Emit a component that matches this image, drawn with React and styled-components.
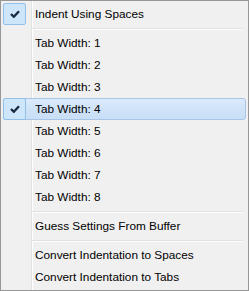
import React from "react";
import styled, { createGlobalStyle } from "styled-components";

const Global = createGlobalStyle`
  html, body { margin: 0; padding: 0; background: #fff; }
  body { font-family: "Segoe UI", "Liberation Sans", "Noto Sans", Arial, sans-serif; }
`;

const Menu = styled.div`
  box-sizing: border-box;
  width: 249px;
  height: 291px;
  border: 1px solid #979797;
  padding: 2px;
  background:
    linear-gradient(to right, transparent 30px, #e2e3e3 30px, #e2e3e3 31px, #ffffff 31px, #ffffff 32px, transparent 32px),
    #f0f0f0;
  display: flex;
  flex-direction: column;
`;

const Item = styled.div`
  box-sizing: border-box;
  height: 22px;
  display: flex;
  align-items: center;
  border-radius: 3px;
  border: 1px solid ${(p) => (p.$active ? "#a8c4e6" : "transparent")};
  background: ${(p) =>
    p.$active ? "linear-gradient(to bottom, #dcebfc 0%, #cfe3f8 50%, #c9dff7 100%)" : "transparent"};
  font-size: 11.8px;
  color: #000;
`;

const CheckCell = styled.div`
  width: 31px;
  height: 100%;
  margin-left: -1px;
  display: flex;
  align-items: center;
  flex-shrink: 0;
`;

const CheckBox = styled.div`
  box-sizing: border-box;
  width: 23px;
  height: 22px;
  border: 1px solid #92c0e8;
  border-radius: 2px;
  background: #cde6fa;
  display: flex;
  align-items: center;
  justify-content: center;
`;

const Label = styled.span`
  white-space: nowrap;
  padding-left: 1px;
`;

const Separator = styled.div`
  height: 7px;
  display: flex;
  align-items: center;
  padding-left: 29px;
  padding-right: 3px;
  &::before {
    content: "";
    flex: 1;
    height: 0;
    border-top: 1px solid #e0e0e0;
    border-bottom: 1px solid #ffffff;
  }
`;

const Check = () => (
  <svg width="10" height="8" viewBox="0 0 10 8">
    <path d="M1 4 L3.8 6.8 L9 1.2" fill="none" stroke="#1a2b40" strokeWidth="2.3" />
  </svg>
);

function MenuItem({ label, checked, active }) {
  return (
    <Item $active={active}>
      <CheckCell>
        {checked && (
          <CheckBox>
            <Check />
          </CheckBox>
        )}
      </CheckCell>
      <Label>{label}</Label>
    </Item>
  );
}

export default function App() {
  const widths = [1, 2, 3, 4, 5, 6, 7, 8];
  return (
    <>
      <Global />
      <Menu>
        <MenuItem label="Indent Using Spaces" checked />
        <Separator />
        {widths.map((w) => (
          <MenuItem key={w} label={`Tab Width: ${w}`} checked={w === 4} active={w === 4} />
        ))}
        <Separator />
        <MenuItem label="Guess Settings From Buffer" />
        <Separator />
        <MenuItem label="Convert Indentation to Spaces" />
        <MenuItem label="Convert Indentation to Tabs" />
      </Menu>
    </>
  );
}
